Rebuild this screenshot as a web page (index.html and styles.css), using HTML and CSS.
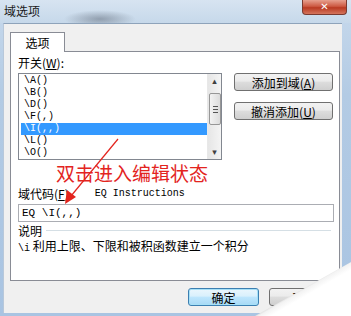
FILE: index.html
```html
<!DOCTYPE html>
<html>
<head>
<meta charset="utf-8">
	<title>域选项</title>
	<link rel="stylesheet" href="styles.css">
</head>
<body>
<div class="window">
	<div class="titlebar">
		<span class="title">域选项</span>
		<span class="close">&#x2715;</span>
	</div>
	<div class="client">
		<div class="tab">选项</div>
		<div class="panel">
			<label class="lbl">开关(<u>W</u>):</label>
			<div class="switch-row">
				<div class="listbox">
					<ul class="items">
						<li>\A()</li>
						<li>\B()</li>
						<li>\D()</li>
						<li>\F(,)</li>
						<li class="sel">\I(,,)</li>
						<li>\L()</li>
						<li>\O()</li>
					</ul>
					<div class="scrollbar">
						<span class="arrow">&#x25B4;</span>
						<span class="thumb"></span>
						<span class="arrow down">&#x25BE;</span>
					</div>
				</div>
				<div class="side-btns">
					<button class="btn">添加到域(<u>A</u>)</button>
					<button class="btn">撤消添加(<u>U</u>)</button>
				</div>
			</div>
			<div class="note">双击进入编辑状态</div>
			<div class="code-row">
				<label class="lbl">域代码(<u>F</u>)</label>
				<span class="mono">EQ Instructions</span>
			</div>
			<div class="codebox mono">EQ \I(,,)</div>
			<div class="desc-head"><span class="lbl">说明</span><span class="rule"></span></div>
			<div class="desc"><span class="mono">\i</span> 利用上限、下限和被积函数建立一个积分</div>
		</div>
		<div class="footer">
			<button class="btn default">确定</button>
			<button class="btn">取消</button>
		</div>
	</div>
	<svg class="pointer" width="351" height="316" viewBox="0 0 351 316">
		<line x1="118" y1="139" x2="71" y2="196" stroke="#e3241e" stroke-width="1.2"/>
		<polygon points="65,204 67,190 76,197" fill="#e3241e"/>
	</svg>
	<div class="curl"></div>
</div>
</body>
</html>
```

FILE: styles.css
```css
*{margin: 0;padding: 0;box-sizing: border-box;}
body{
	background: #fff;
	font-family: "Noto Sans CJK SC", "Liberation Sans", sans-serif;
	font-size: 12px;
	color: #000;
}
.window{
	position: relative;
	width: 351px;
	height: 316px;
	overflow: hidden;
	background: linear-gradient(to bottom, #c7d9ec, #b3cbe4 30%, #a9c4e2);
}
.titlebar{
	height: 23px;
	display: flex;
	justify-content: space-between;
	align-items: flex-start;
	background:
		radial-gradient(ellipse 36px 9px at 100px 19px, rgba(90,100,115,0.5), rgba(90,100,115,0) 100%),
		linear-gradient(to bottom, #d7e4f1, #c6d8ea);
}
.title{
	padding: 3px 0 0 4px;
	font-size: 12px;
	line-height: 16px;
	color: #1a1a1a;
}
.close{
	width: 45px;
	height: 15px;
	margin-right: 4px;
	border: 1px solid #7a3a30;
	border-top: none;
	border-radius: 0 0 4px 4px;
	background: linear-gradient(to bottom, #e7a08f, #cd5a43 45%, #b93a22 55%, #d4745c);
	color: #fff;
	font-family: "DejaVu Sans", sans-serif;
	font-weight: bold;
	font-size: 10px;
	line-height: 14px;
	text-align: center;
}

/*客户区*/
.client{
	width: 339px;
	height: 290px;
	margin-left: 3px;
	padding: 8px 2px 0 6px;
	background: #f0f0f0;
	border-top: 1px solid #8ea3ba;
	border-left: 1px solid #b8c8da;
}
.tab{
	position: relative;
	z-index: 1;
	width: 55px;
	height: 20px;
	margin-bottom: -1px;
	border: 1px solid #898c95;
	border-bottom: none;
	background: #fff;
	text-align: center;
	line-height: 19px;
	font-size: 12px;
}
.panel{
	height: 230px;
	border: 1px solid #898c95;
	background: #fff;
	padding: 3px 0 0 7px;
}
.lbl{
	display: block;
	line-height: 15px;
	font-size: 12px;
}
u{text-decoration: underline;}
.mono{
	font-family: "Liberation Mono", "DejaVu Sans Mono", monospace;
	font-size: 10px;
}

/*开关列表*/
.switch-row{
	display: flex;
	margin-top: 3px;
}
.listbox{
	display: flex;
	width: 204px;
	height: 87px;
	border: 1px solid #828790;
	background: #fff;
}
.items{
	flex: 1;
	list-style: none;
	padding: 1px 0 0 2px;
	font-family: "Liberation Mono", "DejaVu Sans Mono", monospace;
	font-size: 10px;
}
.items li{
	height: 12px;
	line-height: 12px;
	padding-left: 3px;
}
.items li.sel{
	background: #3399ff;
	color: #fff;
}
.scrollbar{
	width: 14px;
	display: flex;
	flex-direction: column;
	align-items: center;
	background: linear-gradient(to right, #e6e6e6, #f4f4f4);
	border-left: 1px solid #e8e8e8;
}
.arrow{
	height: 14px;
	line-height: 14px;
	font-size: 9px;
	color: #404040;
	font-family: "DejaVu Sans", sans-serif;
}
.thumb{
	width: 12px;
	height: 32px;
	margin-top: 5px;
	border: 1px solid #979797;
	border-radius: 2px;
	background-image:
		linear-gradient(#555, #555),
		linear-gradient(#555, #555),
		linear-gradient(#555, #555),
		linear-gradient(to right, #f3f3f3, #dcdcdc);
	background-size: 5px 1px, 5px 1px, 5px 1px, 100% 100%;
	background-position: 3px 12px, 3px 15px, 3px 18px, 0 0;
	background-repeat: no-repeat;
}
.down{margin-top: auto;}
.side-btns{
	display: flex;
	flex-direction: column;
	gap: 11px;
	margin-left: 12px;
}

/*按钮*/
.btn{
	width: 99px;
	height: 18px;
	border: 1px solid #707070;
	border-radius: 3px;
	background: linear-gradient(to bottom, #f2f2f2, #ebebeb 45%, #dddddd 50%, #cfcfcf);
	font-family: "Noto Sans CJK SC", sans-serif;
	font-size: 12px;
	line-height: 15px;
	color: #000;
}

.note{
	height: 22px;
	margin: 2px 0 0 38px;
	font-family: "Noto Sans CJK SC", sans-serif;
	font-size: 19px;
	line-height: 22px;
	color: #e3241e;
}
.code-row{
	display: flex;
	align-items: center;
	margin-top: 2px;
	height: 15px;
}
.code-row .mono{margin-left: 26px;}
.codebox{
	width: 316px;
	height: 18px;
	margin-top: 3px;
	padding-left: 3px;
	border: 1px solid #abadb3;
	line-height: 16px;
	font-size: 11px;
}
.desc-head{
	display: flex;
	align-items: center;
	margin-top: 1px;
}
.rule{
	flex: 1;
	height: 1px;
	margin: 0 8px 0 4px;
	background: #d5dfe5;
}
.desc{
	line-height: 15px;
}

.footer{
	display: flex;
	justify-content: flex-end;
	gap: 10px;
	margin-top: 7px;
}
.footer .btn{width: 71px;}
.footer .default{
	border-color: #3c7fb1;
	box-shadow: inset 0 0 0 1px #a6e0f7;
	background: linear-gradient(to bottom, #eaf6fd, #d9f0fc 45%, #bee6fd 50%, #a7d9f5);
}

/*覆盖层*/
.pointer{
	position: absolute;
	left: 0;
	top: 0;
	pointer-events: none;
}
.curl{
	position: absolute;
	left: 240px;
	top: 240px;
	width: 111px;
	height: 76px;
	clip-path: polygon(15px 76px, 111px 22px, 111px 76px);
	background: linear-gradient(150deg, #dcdcdc 60%, #f3f3f3 62%, #fff 67%);
}
```
